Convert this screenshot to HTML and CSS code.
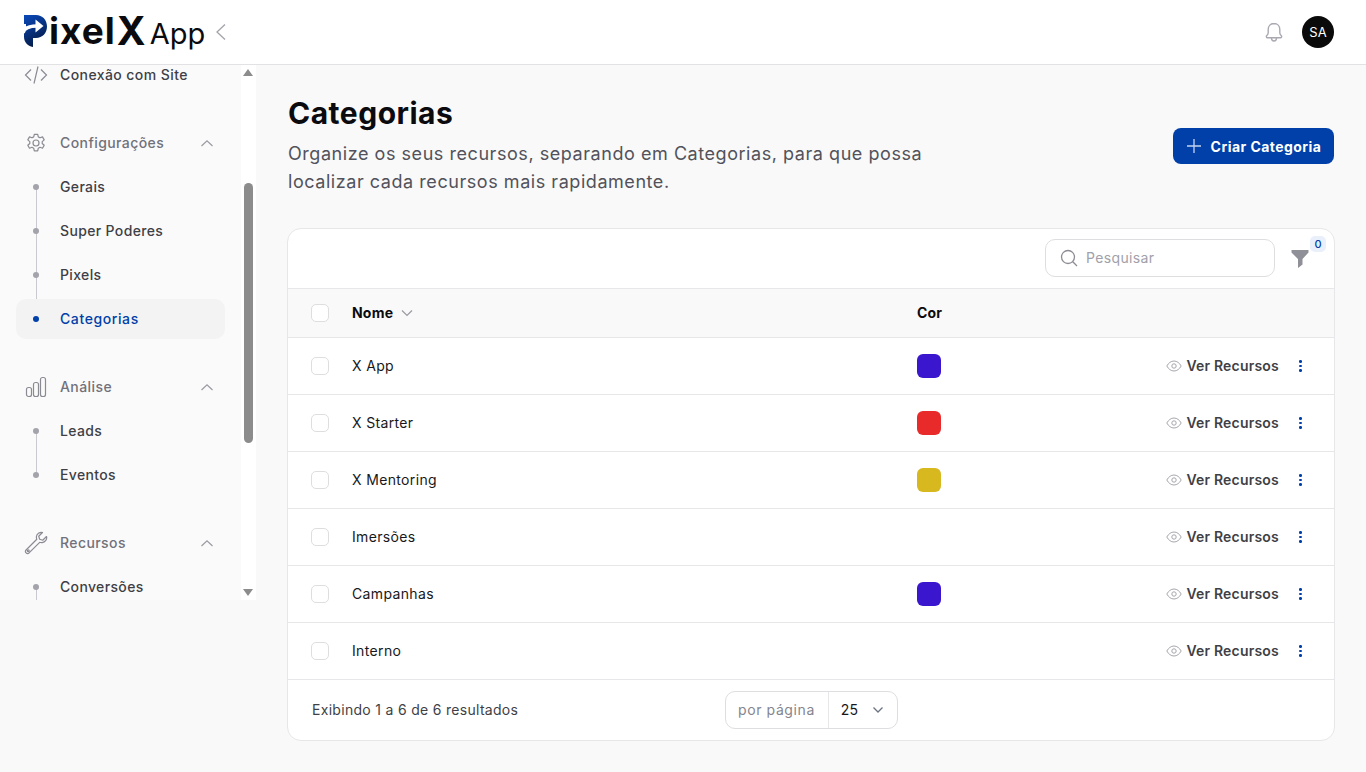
FILE: index.html
```html
<!DOCTYPE html>
<html lang="pt-BR">
<head>
    <meta charset="UTF-8">
    <title>Categorias - PixelX App</title>
    <link rel="stylesheet" href="styles.css">
</head>
<body>
    <header class="topbar">
        <div class="brand">
            <svg class="brand-mark" width="23" height="32" viewBox="0 0 23 32">
                <defs>
                    <linearGradient id="markFill" x1="0.2" y1="0" x2="0.6" y2="1">
                        <stop offset="0" stop-color="#0a47b4"/>
                        <stop offset="0.5" stop-color="#07307c"/>
                        <stop offset="1" stop-color="#04183f"/>
                    </linearGradient>
                </defs>
                <path fill="url(#markFill)" d="M0 0H12C18.500 0 23 5 23 11.500C23 18 18.500 23 12 23H9V32C3.500 31 0 27 0 22V0Z"/>
                <path fill="none" stroke="#fff" stroke-width="3.600" d="M-1 18C0 13 5 11 13 11"/>
                <path fill="#fff" d="M11.500 4.500 19.500 11 11.500 17.500Z"/>
                <path fill="#fff" d="M-1 9H2V13L-1 17Z"/>
            </svg>
            <span class="brand-name">ixel</span><span class="brand-x">X</span><span class="brand-app">App</span>
            <svg class="brand-toggle" width="12" height="18" viewBox="0 0 12 18"><path d="M10 1.500 2 9l8 7.500" fill="none" stroke="#a3a3ab" stroke-width="1.300"/></svg>
        </div>
        <div class="topbar-actions">
            <svg width="24" height="24" viewBox="0 0 24 24" fill="none" stroke="#a9a9b2" stroke-width="1.400" stroke-linejoin="round"><path d="M12 3.500c-3.400 0-5.800 2.600-5.800 6v3.300c0 1.300-.6 2.200-1.500 3-.7.700-.3 2 .8 2h13c1.100 0 1.500-1.300.8-2-.9-.8-1.500-1.700-1.500-3V9.500c0-3.400-2.400-6-5.800-6z"/><path d="M9.500 18c0 1.700 1.100 3 2.500 3s2.500-1.300 2.500-3"/></svg>
            <div class="avatar">SA</div>
        </div>
    </header>

    <div class="layout">
        <aside class="sidebar">
            <div class="sidebar-scroll">
                <nav class="menu">
                    <div class="menu-group">
                        <div class="menu-row menu-link">
                            <svg class="menu-icon" width="24" height="24" viewBox="0 0 24 24" fill="none" stroke="#8b8b94" stroke-width="1.200"><path d="M7 6.500 1.500 12 7 17.500M17 6.500l5.500 5.500-5.500 5.500M14 3.500 10 20.500"/></svg>
                            <span>Conexão com Site</span>
                        </div>
                    </div>

                    <div class="menu-group">
                        <div class="menu-row menu-title">
                            <svg class="menu-icon" width="24" height="24" viewBox="0 0 24 24" fill="none" stroke="#8b8b94" stroke-width="1.200" stroke-linejoin="round"><path d="M10.300 3.300h3.400l.6 2.600 1.700.9 2.500-.9 1.700 3-2 1.700v1.900l2 1.700-1.700 3-2.500-.9-1.700.9-.6 2.600h-3.400l-.6-2.600-1.700-.9-2.500.9-1.700-3 2-1.700v-1.900l-2-1.700 1.700-3 2.500.9 1.700-.9z"/><circle cx="12" cy="12" r="3"/></svg>
                            <span>Configurações</span>
                            <svg class="menu-chevron" width="14" height="8" viewBox="0 0 14 8"><path d="M1.500 7 7 1.800 12.500 7" fill="none" stroke="#9a9aa3" stroke-width="1.200"/></svg>
                        </div>
                        <ul class="sub-list">
                            <li class="sub-item">Gerais</li>
                            <li class="sub-item">Super Poderes</li>
                            <li class="sub-item">Pixels</li>
                            <li class="sub-item is-active">Categorias</li>
                        </ul>
                    </div>

                    <div class="menu-group">
                        <div class="menu-row menu-title">
                            <svg class="menu-icon" width="24" height="24" viewBox="0 0 24 24" fill="none" stroke="#8b8b94" stroke-width="1.200"><rect x="2.500" y="12.500" width="5" height="9" rx="2"/><rect x="9.500" y="7.500" width="5" height="14" rx="2"/><rect x="16.500" y="2.500" width="5" height="19" rx="2"/></svg>
                            <span>Análise</span>
                            <svg class="menu-chevron" width="14" height="8" viewBox="0 0 14 8"><path d="M1.500 7 7 1.800 12.500 7" fill="none" stroke="#9a9aa3" stroke-width="1.200"/></svg>
                        </div>
                        <ul class="sub-list">
                            <li class="sub-item">Leads</li>
                            <li class="sub-item">Eventos</li>
                        </ul>
                    </div>

                    <div class="menu-group">
                        <div class="menu-row menu-title">
                            <svg class="menu-icon" width="24" height="24" viewBox="0 0 24 24" fill="none" stroke="#8b8b94" stroke-width="1.200" stroke-linejoin="round"><path d="M22.500 5.500l-3.800 3.700-3-1-1-3L18.500 1.500c-2.800-.6-5.900 1.400-6.100 4.300-.1 1 .1 1.700.4 2.500L2.300 18.700c-1.300 1.300-.8 2.600-.2 3.200.7.700 1.900 1 3.200-.2l10.400-10.400c.8.300 1.600.4 2.500.3 3-.4 5.200-3.400 4.300-6.100z"/><circle cx="4.300" cy="19.700" r=".9"/></svg>
                            <span>Recursos</span>
                            <svg class="menu-chevron" width="14" height="8" viewBox="0 0 14 8"><path d="M1.500 7 7 1.800 12.500 7" fill="none" stroke="#9a9aa3" stroke-width="1.200"/></svg>
                        </div>
                        <ul class="sub-list">
                            <li class="sub-item has-more">Conversões</li>
                        </ul>
                    </div>
                </nav>
            </div>
            <div class="scrollbar">
                <span class="scroll-arrow scroll-up"></span>
                <div class="scroll-track"><div class="scroll-thumb"></div></div>
                <span class="scroll-arrow scroll-down"></span>
            </div>
        </aside>

        <main class="content">
            <section class="page-head">
                <div>
                    <h1>Categorias</h1>
                    <p>Organize os seus recursos, separando em Categorias, para que possa localizar cada recursos mais rapidamente.</p>
                </div>
                <button class="create-btn">
                    <svg width="16" height="16" viewBox="0 0 16 16"><path d="M8 1v14M1 8h14" stroke="#c4d3ee" stroke-width="1.300"/></svg>
                    Criar Categoria
                </button>
            </section>

            <section class="card">
                <div class="toolbar">
                    <div class="search">
                        <svg width="20" height="20" viewBox="0 0 20 20" fill="none" stroke="#8d8d96" stroke-width="1.300"><circle cx="9" cy="9" r="6.500"/><path d="m13.800 13.800 4.200 4.200"/></svg>
                        <span>Pesquisar</span>
                    </div>
                    <div class="filter">
                        <svg width="18" height="20" viewBox="0 0 18 20"><path fill="#8f8f98" d="M.5 1h17v2.500L11.500 10v5.500L7 19v-9L.5 3.500z"/></svg>
                        <span class="filter-count">0</span>
                    </div>
                </div>

                <div class="row row-head">
                    <span class="check"></span>
                    <div class="col-name">Nome
                        <svg width="12" height="8" viewBox="0 0 12 8"><path d="M1 1.500 6 6.500l5-5" fill="none" stroke="#9a9aa3" stroke-width="1.200"/></svg>
                    </div>
                    <div class="col-color">Cor</div>
                </div>

                <div class="row">
                    <span class="check"></span>
                    <div class="col-name">X App</div>
                    <div class="col-color"><span class="swatch swatch-blue"></span></div>
                    <div class="col-actions">
                        <svg class="eye" width="16" height="12" viewBox="0 0 16 12" fill="none" stroke="#a6a6ae" stroke-width="1"><path d="M.8 6C2.500 3 5 1 8 1s5.500 2 7.200 5C13.500 9 11 11 8 11S2.500 9 .8 6z"/><circle cx="8" cy="6" r="2.200"/></svg>
                        <span class="see-link">Ver Recursos</span>
                        <span class="kebab"><i></i><i></i><i></i></span>
                    </div>
                </div>
                <div class="row">
                    <span class="check"></span>
                    <div class="col-name">X Starter</div>
                    <div class="col-color"><span class="swatch swatch-red"></span></div>
                    <div class="col-actions">
                        <svg class="eye" width="16" height="12" viewBox="0 0 16 12" fill="none" stroke="#a6a6ae" stroke-width="1"><path d="M.8 6C2.500 3 5 1 8 1s5.500 2 7.200 5C13.500 9 11 11 8 11S2.500 9 .8 6z"/><circle cx="8" cy="6" r="2.200"/></svg>
                        <span class="see-link">Ver Recursos</span>
                        <span class="kebab"><i></i><i></i><i></i></span>
                    </div>
                </div>
                <div class="row">
                    <span class="check"></span>
                    <div class="col-name">X Mentoring</div>
                    <div class="col-color"><span class="swatch swatch-yellow"></span></div>
                    <div class="col-actions">
                        <svg class="eye" width="16" height="12" viewBox="0 0 16 12" fill="none" stroke="#a6a6ae" stroke-width="1"><path d="M.8 6C2.500 3 5 1 8 1s5.500 2 7.200 5C13.500 9 11 11 8 11S2.500 9 .8 6z"/><circle cx="8" cy="6" r="2.200"/></svg>
                        <span class="see-link">Ver Recursos</span>
                        <span class="kebab"><i></i><i></i><i></i></span>
                    </div>
                </div>
                <div class="row">
                    <span class="check"></span>
                    <div class="col-name">Imersões</div>
                    <div class="col-color"></div>
                    <div class="col-actions">
                        <svg class="eye" width="16" height="12" viewBox="0 0 16 12" fill="none" stroke="#a6a6ae" stroke-width="1"><path d="M.8 6C2.500 3 5 1 8 1s5.500 2 7.200 5C13.500 9 11 11 8 11S2.500 9 .8 6z"/><circle cx="8" cy="6" r="2.200"/></svg>
                        <span class="see-link">Ver Recursos</span>
                        <span class="kebab"><i></i><i></i><i></i></span>
                    </div>
                </div>
                <div class="row">
                    <span class="check"></span>
                    <div class="col-name">Campanhas</div>
                    <div class="col-color"><span class="swatch swatch-blue"></span></div>
                    <div class="col-actions">
                        <svg class="eye" width="16" height="12" viewBox="0 0 16 12" fill="none" stroke="#a6a6ae" stroke-width="1"><path d="M.8 6C2.500 3 5 1 8 1s5.500 2 7.200 5C13.500 9 11 11 8 11S2.500 9 .8 6z"/><circle cx="8" cy="6" r="2.200"/></svg>
                        <span class="see-link">Ver Recursos</span>
                        <span class="kebab"><i></i><i></i><i></i></span>
                    </div>
                </div>
                <div class="row">
                    <span class="check"></span>
                    <div class="col-name">Interno</div>
                    <div class="col-color"></div>
                    <div class="col-actions">
                        <svg class="eye" width="16" height="12" viewBox="0 0 16 12" fill="none" stroke="#a6a6ae" stroke-width="1"><path d="M.8 6C2.500 3 5 1 8 1s5.500 2 7.200 5C13.500 9 11 11 8 11S2.500 9 .8 6z"/><circle cx="8" cy="6" r="2.200"/></svg>
                        <span class="see-link">Ver Recursos</span>
                        <span class="kebab"><i></i><i></i><i></i></span>
                    </div>
                </div>

                <div class="card-foot">
                    <span class="foot-info">Exibindo 1 a 6 de 6 resultados</span>
                    <div class="per-page">
                        <span class="per-label">por página</span>
                        <span class="per-value">25
                            <svg width="12" height="8" viewBox="0 0 12 8"><path d="M1.500 1.500 6 6l4.500-4.500" fill="none" stroke="#6b7280" stroke-width="1.300"/></svg>
                        </span>
                    </div>
                </div>
            </section>
        </main>
    </div>
</body>
</html>
```

FILE: styles.css
```css
* {
    margin: 0;
    padding: 0;
    box-sizing: border-box;
}
html, body {
    height: 100%;
    overflow: hidden;
}
body {
    font-family: Inter, "Noto Sans", sans-serif;
    background-color: #f9f9f9;
    color: #111;
    display: flex;
    flex-direction: column;
}

/* topo */
.topbar {
    height: 65px;
    flex: none;
    background: #fff;
    border-bottom: 1px solid #e2e2e4;
    display: flex;
    justify-content: space-between;
    align-items: center;
    padding: 0 32px 0 24px;
}
.brand {
    display: flex;
    align-items: flex-end;
    height: 40px;
    color: #0b0b0f;
    margin-top: -3px;
}
.brand-mark {
    margin-bottom: 4px;
}
.brand-name {
    font-size: 37px;
    line-height: 40px;
    font-weight: 700;
    letter-spacing: 1px;
    margin-left: 2px;
}
.brand-x {
    font-size: 39px;
    line-height: 40px;
    font-weight: 700;
    margin-left: 1px;
}
.brand-app {
    font-size: 29px;
    line-height: 34px;
    font-weight: 400;
    margin-left: 4px;
}
.brand-toggle {
    margin: 0 0 10px 10px;
}
.topbar-actions {
    display: flex;
    align-items: center;
    gap: 16px;
}
.avatar {
    width: 32px;
    height: 32px;
    border-radius: 50%;
    background: #0a0a0a;
    color: #fff;
    font-size: 13px;
    display: flex;
    align-items: center;
    justify-content: center;
}

.layout {
    flex: 1;
    display: flex;
    min-height: 0;
}

/* menu lateral */
.sidebar {
    width: 256px;
    flex: none;
    height: 535px;
    display: flex;
}
.sidebar-scroll {
    width: 241px;
    overflow: hidden;
    background: #fafafa;
}
.menu {
    margin-top: -12px;
    padding: 0 16px;
}
.menu-group {
    padding-bottom: 24px;
}
.menu-row {
    height: 44px;
    display: flex;
    align-items: center;
    font-size: 14px;
    font-weight: 500;
    letter-spacing: 0.42px;
}
.menu-row span {
    padding-bottom: 2px;
}
.menu-icon {
    margin-left: 8px;
    margin-right: 12px;
    flex: none;
}
.menu-link {
    color: #3f3f46;
}
.menu-title {
    color: #71717a;
}
.menu-chevron {
    margin-left: auto;
    margin-right: 11px;
}
.sub-list {
    list-style: none;
}
.sub-item {
    position: relative;
    height: 44px;
    padding: 0 0 2px 44px;
    display: flex;
    align-items: center;
    font-size: 14px;
    font-weight: 500;
    letter-spacing: 0.35px;
    color: #3f3f46;
}
.sub-item::before {
    content: "";
    position: absolute;
    left: 17px;
    top: 19px;
    width: 6px;
    height: 6px;
    border-radius: 50%;
    background: #a3a3ab;
    z-index: 1;
}
.sub-item:not(:last-child)::after,
.sub-item.has-more::after {
    content: "";
    position: absolute;
    left: 19.500px;
    top: 22px;
    width: 1px;
    height: 44px;
    background: #c9c9cf;
}
.sub-item.is-active {
    height: 40px;
    margin: 2px 0;
    border-radius: 10px;
    background: #f3f3f4;
    color: #0040a8;
    letter-spacing: 0.6px;
}
.sub-item.is-active::before {
    top: 17px;
    background: #0040a8;
}
.sub-item.has-more::after {
    height: 20px;
}

/* barra de rolagem */
.scrollbar {
    width: 15px;
    background: #fff;
    display: flex;
    flex-direction: column;
    align-items: center;
}
.scroll-arrow {
    flex: none;
    width: 0;
    height: 0;
    margin-right: 1px;
    border-left: 5px solid transparent;
    border-right: 5px solid transparent;
}
.scroll-up {
    margin-top: 4px;
    border-bottom: 7px solid #8c8c8c;
}
.scroll-down {
    margin-bottom: 4px;
    border-top: 7px solid #8c8c8c;
}
.scroll-track {
    flex: 1;
    width: 100%;
    padding: 107px 3px 0;
}
.scroll-thumb {
    width: 9px;
    height: 260px;
    border-radius: 5px;
    background: #8c8c8c;
}

/* conteudo */
.content {
    flex: 1;
    min-width: 0;
    padding: 30px 32px 0;
}
.page-head {
    display: flex;
    justify-content: space-between;
    align-items: flex-end;
    margin-bottom: 32px;
}
.page-head h1 {
    font-size: 30px;
    line-height: 36px;
    font-weight: 700;
    letter-spacing: 0.5px;
    color: #0b0b0f;
    margin-bottom: 9px;
}
.page-head p {
    width: 660px;
    font-size: 18px;
    line-height: 28px;
    letter-spacing: 0.55px;
    color: #52525b;
}
.create-btn {
    width: 161px;
    height: 36px;
    margin-bottom: 32px;
    border: none;
    border-radius: 8px;
    background: #0040a8;
    color: #fff;
    font: 700 14px Inter, sans-serif;
    letter-spacing: 0.45px;
    display: flex;
    align-items: center;
    justify-content: center;
    gap: 9px;
}

/* tabela */
.card {
    margin: 0 -1px;
    background: #fff;
    border: 1px solid #e7e7e9;
    border-radius: 14px;
    overflow: hidden;
}
.toolbar {
    height: 60px;
    display: flex;
    justify-content: flex-end;
    align-items: center;
    padding-right: 8px;
    border-bottom: 1px solid #e7e7e9;
}
.search {
    width: 230px;
    height: 38px;
    margin-top: -1px;
    border: 1px solid #dedee1;
    border-radius: 10px;
    display: flex;
    align-items: center;
    gap: 7px;
    padding-left: 13px;
    font-size: 14px;
    letter-spacing: 0.35px;
    color: #a1a1aa;
}
.search span {
    padding-bottom: 2px;
}
.filter {
    position: relative;
    width: 51px;
    height: 38px;
    margin-top: -1px;
    display: flex;
    align-items: center;
    padding-left: 16px;
}
.filter svg {
    margin-top: 1px;
}
.filter-count {
    position: absolute;
    left: 35px;
    top: -3px;
    width: 16px;
    height: 16px;
    border-radius: 5px;
    background: #e9f0fb;
    color: #0040a8;
    font-size: 11px;
    font-weight: 500;
    text-align: center;
    line-height: 16px;
}
.row {
    height: 57px;
    display: flex;
    align-items: center;
    padding: 0 31px 0 23px;
    border-bottom: 1px solid #e7e7e9;
    font-size: 14px;
    letter-spacing: 0.35px;
    color: #18181b;
}
.row-head {
    height: 49px;
    background: #f9f9f9;
    font-weight: 700;
    letter-spacing: 0.2px;
    color: #0b0b0f;
}
.row-head .col-color {
    padding-bottom: 2px;
}
.check {
    width: 18px;
    height: 18px;
    flex: none;
    background: #fff;
    border: 1px solid #dedee1;
    border-radius: 5px;
}
.col-name {
    width: 565px;
    margin-left: 23px;
    padding-bottom: 2px;
    display: flex;
    align-items: center;
    gap: 8px;
}
.col-name svg {
    margin-top: 2px;
}
.col-color {
    flex: none;
    width: 100px;
    display: flex;
    align-items: center;
}
.col-actions {
    margin-left: auto;
    display: flex;
    align-items: center;
}
.swatch {
    width: 24px;
    height: 24px;
    border-radius: 6px;
}
.swatch-blue {
    background: #3a17cf;
}
.swatch-red {
    background: #e82a2a;
}
.swatch-yellow {
    background: #d7b81e;
}
.eye {
    margin-right: 4px;
}
.see-link {
    padding-bottom: 2px;
    font-weight: 600;
    letter-spacing: 0.2px;
    color: #3f3f46;
}
.kebab {
    margin-left: 19px;
    width: 5px;
    display: flex;
    flex-direction: column;
    align-items: center;
    gap: 2px;
}
.kebab i {
    width: 2.500px;
    height: 2.500px;
    border-radius: 50%;
    background: #0040a8;
}

/* rodape da tabela */
.card-foot {
    height: 60px;
    display: flex;
    align-items: center;
    padding-left: 24px;
}
.foot-info {
    width: 413px;
    padding-bottom: 2px;
    font-size: 14px;
    letter-spacing: 0.3px;
    color: #3f3f46;
}
.per-page {
    height: 38px;
    margin-top: -1px;
    display: flex;
    align-items: center;
    border: 1px solid #dedee1;
    border-radius: 10px;
    font-size: 14px;
}
.per-label {
    height: 100%;
    padding: 0 13px 0 12px;
    display: flex;
    align-items: center;
    letter-spacing: 0.6px;
    color: #85858e;
    border-right: 1px solid #e7e7e9;
}
.per-value {
    width: 68px;
    padding: 0 13px 0 12px;
    display: flex;
    align-items: center;
    justify-content: space-between;
    color: #18181b;
}
```
